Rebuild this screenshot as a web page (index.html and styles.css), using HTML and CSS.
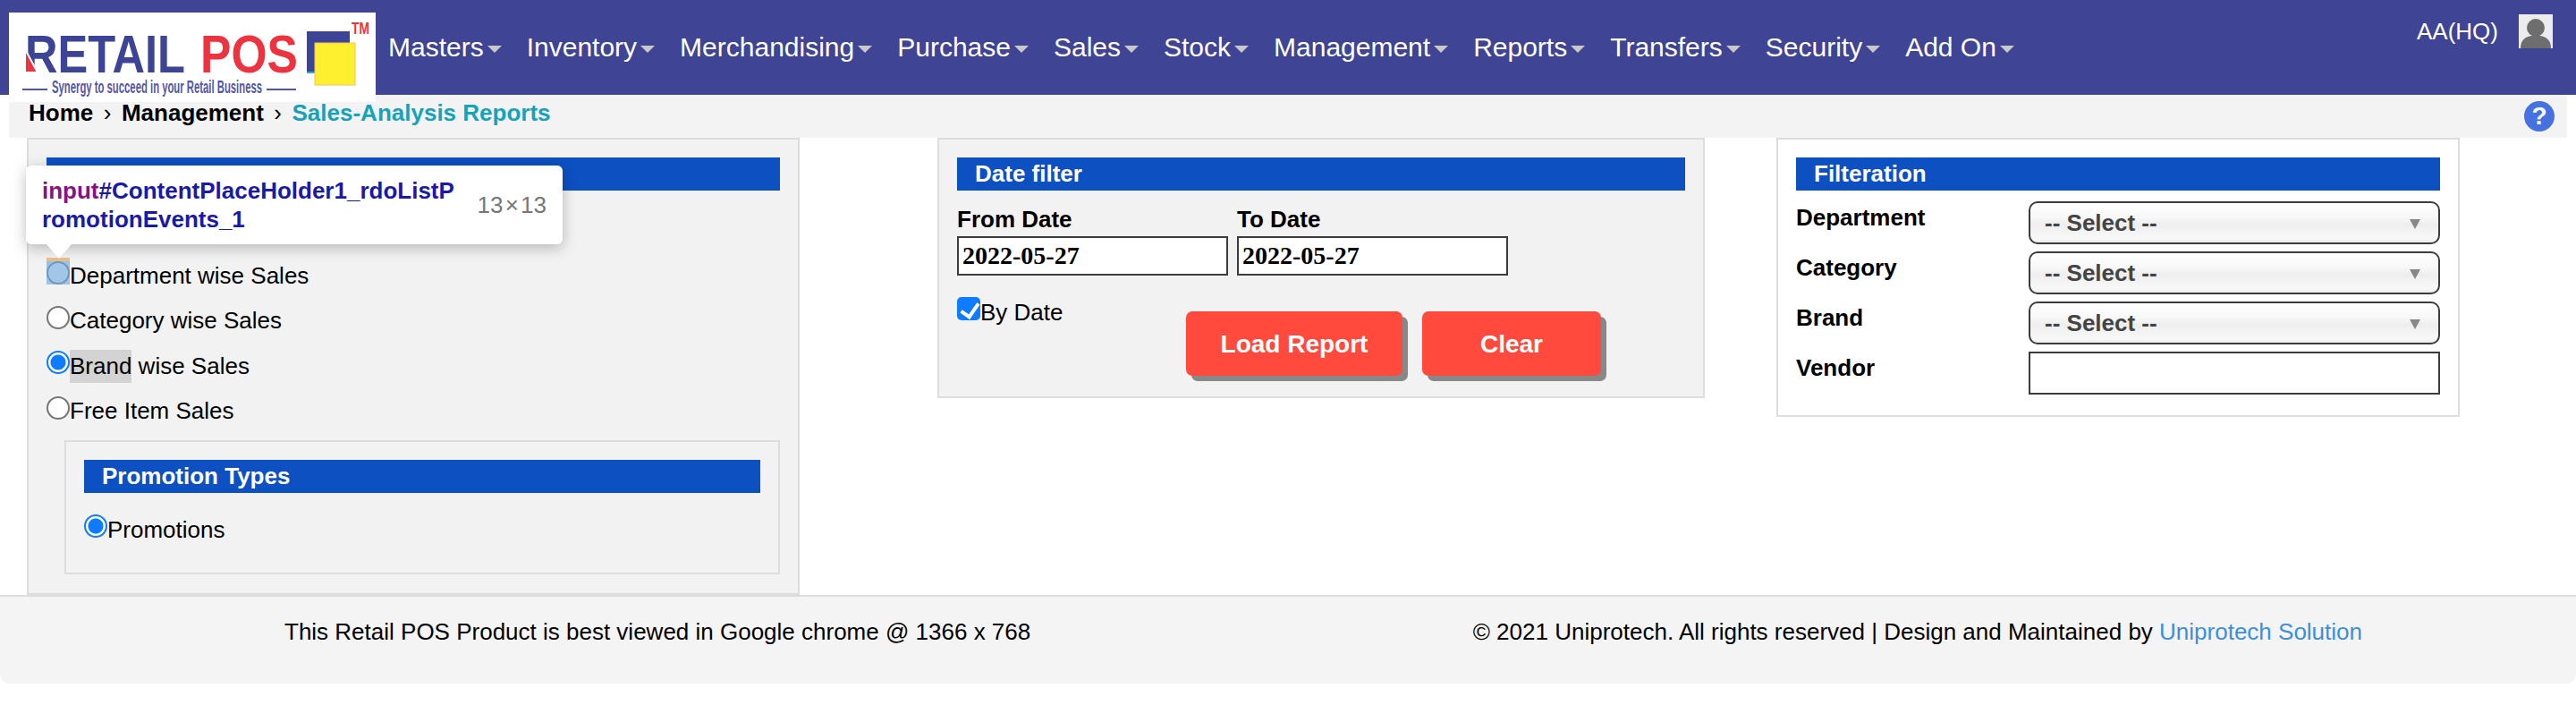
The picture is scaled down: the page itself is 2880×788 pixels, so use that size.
FILE: index.html
```html
<!DOCTYPE html>
<html lang="en">
<head>
    <meta charset="UTF-8">
    <meta name="viewport" content="width=device-width, initial-scale=1.0">
    <title>Sales-Analysis Reports</title>
    <link rel="stylesheet" href="styles.css">
</head>
<body>
    <div class="header">
        <div class="logo">
            <svg width="410" height="100" viewBox="0 0 410 100">
                <text transform="translate(18 67) scale(.825 1)" class="logo-word" fill="#3d4496" textLength="217" lengthAdjust="spacingAndGlyphs">RETAIL</text>
                <polygon points="18,41 32,67 18,67" fill="#ee3340" stroke="#fff" stroke-width="2"/>
                <text transform="translate(214 67) scale(.858 1)" class="logo-word" fill="#ee3340" textLength="127" lengthAdjust="spacingAndGlyphs">POS</text>
                <rect x="333" y="21" width="48" height="47" fill="#3d4496"/>
                <rect x="333" y="66" width="9" height="2" fill="#2fa8e0"/>
                <rect x="342" y="34" width="45" height="47" fill="#fff02f" stroke="#f5c35a" stroke-width="1"/>
                <text transform="translate(383 24) scale(.77 1)" class="logo-tm" fill="#ee3340" textLength="26" lengthAdjust="spacingAndGlyphs">TM</text>
                <rect x="15" y="85" width="28" height="2" fill="#5357a5"/>
                <text transform="translate(48 90) scale(.52 1)" class="logo-tag" fill="#5357a5" textLength="452" lengthAdjust="spacingAndGlyphs">Synergy to succeed in your Retail Business</text>
                <rect x="288" y="85" width="33" height="2" fill="#5357a5"/>
            </svg>
        </div>
        <ul class="nav">
            <li>Masters</li>
            <li>Inventory</li>
            <li>Merchandising</li>
            <li>Purchase</li>
            <li>Sales</li>
            <li>Stock</li>
            <li>Management</li>
            <li>Reports</li>
            <li>Transfers</li>
            <li>Security</li>
            <li>Add On</li>
        </ul>
        <div class="user">
            <span>AA(HQ)</span>
            <svg class="avatar" width="38" height="38" viewBox="0 0 38 38">
                <rect width="38" height="38" fill="#ececec"/>
                <circle cx="19" cy="15" r="10" fill="#6e6e6e"/>
                <path d="M2 38 C2 28 8 25 14 24 L24 24 C30 25 36 28 36 38 Z" fill="#6e6e6e"/>
            </svg>
        </div>
    </div>

    <div class="breadcrumb">
        <a>Home</a><span class="sep">›</span><a>Management</a><span class="sep">›</span><a class="current">Sales-Analysis Reports</a>
        <span class="help">?</span>
    </div>

    <div class="content">
        <div class="panel panel-type">
            <div class="title"></div>
            <div class="option"><input type="radio" name="rpt"></div>
            <div class="option">
                <input type="radio" name="rpt"><label>Department wise Sales</label>
                <div class="tip">
                    <div class="tip-name"><span class="tip-tag">input</span>#ContentPlaceHolder1_rdoListPromotionEvents_1</div>
                    <div class="tip-size">13 × 13</div>
                </div>
                <div class="hl-margin"></div>
                <div class="hl-box"></div>
            </div>
            <div class="option"><input type="radio" name="rpt"><label>Category wise Sales</label></div>
            <div class="option"><input type="radio" name="rpt" checked><label><span class="mark">Brand</span> wise Sales</label></div>
            <div class="option"><input type="radio" name="rpt"><label>Free Item Sales</label></div>
            <div class="panel inner">
                <div class="title">Promotion Types</div>
                <div class="option"><input type="radio" name="promo" checked><label>Promotions</label></div>
            </div>
        </div>

        <div class="panel panel-date">
            <div class="title">Date filter</div>
            <div class="dates">
                <div class="date-col">
                    <label>From Date</label>
                    <input type="text" value="2022-05-27">
                </div>
                <div class="date-col">
                    <label>To Date</label>
                    <input type="text" value="2022-05-27">
                </div>
            </div>
            <div class="actions">
                <div class="by-date"><input type="checkbox" checked><label>By Date</label></div>
                <button class="btn btn-load">Load Report</button>
                <button class="btn btn-clear">Clear</button>
            </div>
        </div>

        <div class="panel panel-filter">
            <div class="title">Filteration</div>
            <div class="filter-grid">
                <label>Department</label>
                <div class="select-wrap"><select><option>-- Select --</option></select></div>
                <label>Category</label>
                <div class="select-wrap"><select><option>-- Select --</option></select></div>
                <label>Brand</label>
                <div class="select-wrap"><select><option>-- Select --</option></select></div>
                <label>Vendor</label>
                <input type="text">
            </div>
        </div>
    </div>

    <div class="footer">
        <div class="footer-left">This Retail POS Product is best viewed in Google chrome @ 1366 x 768</div>
        <div class="footer-right">© 2021 Uniprotech. All rights reserved | Design and Maintained by <a>Uniprotech Solution</a></div>
    </div>
</body>
</html>
```

FILE: styles.css
```css
* {
    box-sizing: border-box;
}
body {
    margin: 0;
    background-color: #fff;
    font-family: "Liberation Sans", Arial, sans-serif;
    font-size: 26px;
    color: #000;
}

/* header */
.header {
    height: 106px;
    background-color: #3f4494;
    display: flex;
    color: #fff;
}
.logo {
    position: relative;
    z-index: 1;
    flex: none;
    width: 410px;
    height: 100px;
    margin: 14px 0 0 10px;
    background-color: #fff;
}
.logo svg {
    display: block;
}
.logo-word {
    font-family: "Liberation Sans", sans-serif;
    font-weight: bold;
    font-size: 60px;
}
.logo-tm {
    font-family: "Liberation Sans", sans-serif;
    font-weight: bold;
    font-size: 18px;
}
.logo-tag {
    font-family: "Liberation Sans", sans-serif;
    font-weight: bold;
    font-size: 20px;
}
.nav {
    list-style: none;
    display: flex;
    align-items: center;
    margin: 0 0 0 14px;
    padding: 0;
    gap: 28px;
    font-size: 30px;
    line-height: 34px;
}
.nav li {
    display: flex;
    align-items: center;
    gap: 4px;
}
.nav li::after {
    content: "";
    border-top: 8px solid #c8c8c8;
    border-left: 8px solid transparent;
    border-right: 8px solid transparent;
    margin-top: 3px;
}
.user {
    margin-left: auto;
    margin-right: 26px;
    padding-top: 16px;
    display: flex;
    align-items: flex-start;
    gap: 23px;
    line-height: 38px;
}
.avatar {
    display: block;
}

/* breadcrumb */
.breadcrumb {
    height: 48px;
    margin: 0 10px;
    padding: 0 0 8px 22px;
    background-color: #f3f3f3;
    display: flex;
    align-items: center;
    font-weight: bold;
}
.breadcrumb .sep {
    font-weight: normal;
    margin: 0 11.5px;
}
.breadcrumb .current {
    color: #17a2b8;
}
.help {
    margin: 8px 14px 0 auto;
    width: 34px;
    height: 34px;
    border-radius: 50%;
    background-color: #4671e0;
    color: #fff;
    font-size: 28px;
    line-height: 34px;
    text-align: center;
}

/* panels */
.content {
    height: 511px;
    padding-left: 30px;
    display: flex;
    align-items: flex-start;
}
.panel {
    border: 2px solid #ddd;
    padding: 20px;
    background-color: #f2f2f2;
}
.title {
    height: 37px;
    padding-left: 20px;
    background-color: #0d50c2;
    color: #fff;
    font-weight: bold;
    line-height: 37px;
}
.panel-type {
    width: 864px;
    height: 511px;
}
.panel-type > .title {
    margin-bottom: 20px;
}
.panel-date {
    width: 858px;
    height: 291px;
    margin-left: 154px;
}
.panel-filter {
    width: 764px;
    height: 312px;
    margin-left: 80px;
    background-color: #fff;
}

/* radio list */
.option {
    position: relative;
    height: 50.4px;
    display: flex;
    align-items: center;
}
.option label {
    line-height: 37px;
}
input[type="radio"] {
    appearance: none;
    flex: none;
    width: 26px;
    height: 26px;
    margin: 0 0 8px;
    border: 2px solid #767676;
    border-radius: 50%;
    background-color: #fff;
}
input[type="radio"]:checked {
    border-color: #0f7bff;
    background: radial-gradient(circle, #0f7bff 0 8px, #fff 9px);
}
.mark {
    display: inline-block;
    background-color: #d3d3d3;
}
.inner {
    margin: 7px 0 0 20px;
    height: 150px;
}
.inner .option {
    margin-top: 16px;
}

/* inspector overlay */
.tip {
    position: absolute;
    z-index: 3;
    left: -23px;
    bottom: 61px;
    width: 600px;
    height: 88px;
    padding: 12px 18px;
    display: flex;
    align-items: center;
    background-color: #fff;
    border-radius: 6px;
    box-shadow: 0 4px 16px rgba(0, 0, 0, 0.25);
    line-height: 32px;
}
.tip::after {
    content: "";
    position: absolute;
    left: 23px;
    top: 88px;
    border-top: 16px solid #fff;
    border-left: 14px solid transparent;
    border-right: 14px solid transparent;
}
.tip-name {
    width: 470px;
    font-weight: bold;
    color: #1a1aa6;
    word-break: break-all;
}
.tip-tag {
    color: #881280;
}
.tip-size {
    flex: none;
    margin-left: auto;
    color: #777;
    word-spacing: -5px;
}
.hl-margin {
    position: absolute;
    left: 0;
    top: 5px;
    width: 26px;
    height: 4px;
    background-color: #e8c08f;
}
.hl-box {
    position: absolute;
    left: 0;
    top: 9px;
    width: 26px;
    height: 26px;
    background-color: rgba(111, 168, 220, 0.66);
}

/* date filter */
.dates {
    display: flex;
    gap: 10px;
    margin-top: 15px;
}
.date-col label {
    display: block;
    margin-bottom: 2px;
    font-weight: bold;
    line-height: 34px;
}
.date-col input {
    display: block;
    width: 303px;
    height: 44px;
    padding: 0 4px;
    border: 2px solid #3c3c3c;
    background-color: #fff;
    font-family: "Liberation Serif", serif;
    font-weight: bold;
    font-size: 28px;
    color: #000;
}
.actions {
    display: flex;
    align-items: flex-start;
    margin-top: 24px;
}
.by-date {
    display: flex;
    width: 256px;
    line-height: 34px;
}
input[type="checkbox"] {
    appearance: none;
    flex: none;
    width: 26px;
    height: 26px;
    margin: 0;
    border-radius: 5px;
    background-color: #0f7bff;
    position: relative;
}
input[type="checkbox"]::after {
    content: "";
    position: absolute;
    left: 8px;
    top: 3px;
    width: 9px;
    height: 16px;
    border: solid #fff;
    border-width: 0 4px 4px 0;
    transform: rotate(35deg);
}
.btn {
    height: 72px;
    margin-top: 16px;
    padding-top: 2px;
    border: none;
    border-radius: 7px;
    background-color: #ff4a3d;
    color: #fff;
    font-family: inherit;
    font-weight: bold;
    font-size: 28px;
    box-shadow: 6px 6px 0 #888;
    cursor: pointer;
}
.btn-load {
    width: 242px;
}
.btn-clear {
    width: 200px;
    margin-left: 22px;
}

/* filteration */
.filter-grid {
    display: grid;
    grid-template-columns: 260px 460px;
    grid-auto-rows: 48px;
    row-gap: 8px;
    margin-top: 12px;
}
.filter-grid label {
    font-weight: bold;
    line-height: 36px;
}
.filter-grid input {
    height: 48px;
    border: 2px solid #3c3c3c;
    background-color: #fff;
}
.select-wrap {
    position: relative;
}
.select-wrap::after {
    content: "";
    position: absolute;
    right: 22px;
    top: 20px;
    border-top: 11px solid #888;
    border-left: 6px solid transparent;
    border-right: 6px solid transparent;
}
.select-wrap select {
    appearance: none;
    width: 100%;
    height: 48px;
    padding: 0 16px;
    border: 2px solid #3c3c3c;
    border-radius: 10px;
    background: linear-gradient(#fff 0%, #f8f8f8 35%, #eee 55%, #f8f8f8 90%, #eee 100%);
    font-family: inherit;
    font-weight: bold;
    font-size: 26px;
    color: #444;
}

/* footer */
.footer {
    height: 99px;
    border-top: 2px solid #ddd;
    border-radius: 0 0 10px 10px;
    background-color: #f4f4f4;
    display: flex;
    padding: 19px 239px 0 318px;
    justify-content: space-between;
    line-height: 40px;
}
.footer a {
    color: #3b8fdc;
}
```
